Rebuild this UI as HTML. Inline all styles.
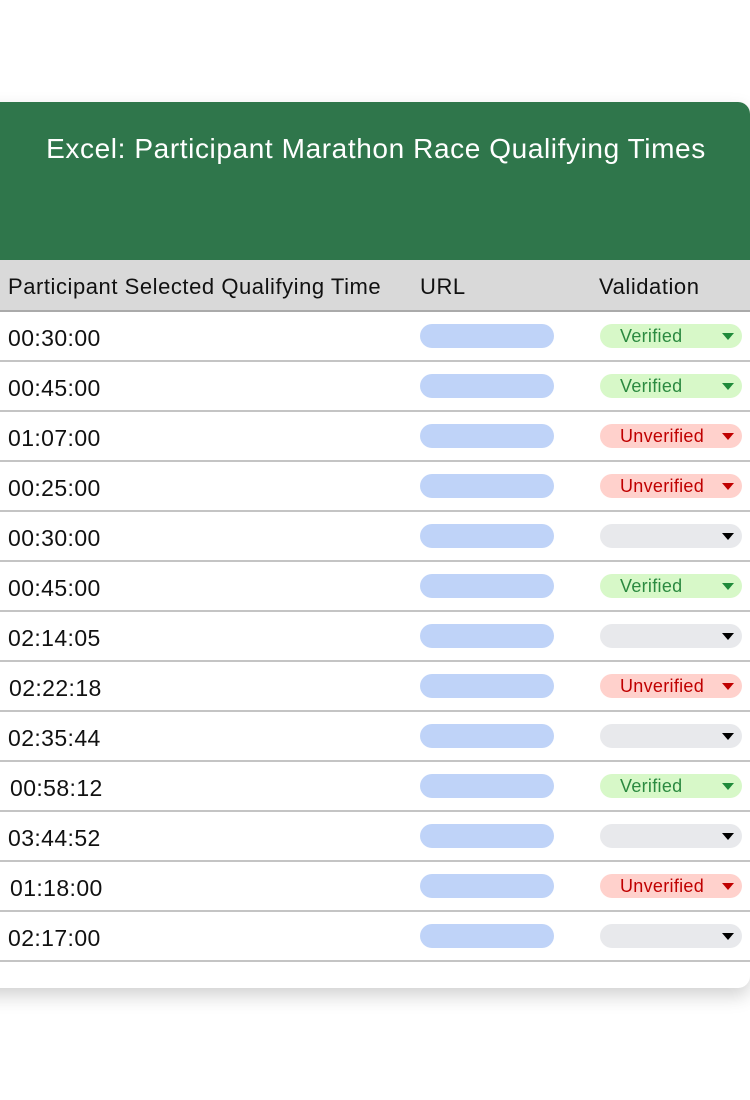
<!DOCTYPE html>
<html><head><style>
body{margin:0;width:750px;height:1100px;background:#fff;font-family:"Liberation Sans",sans-serif;position:relative;overflow:hidden}
.card{position:absolute;left:-20px;top:102px;width:770px;height:886px;background:#fff;border-radius:0 12px 12px 0;box-shadow:0 8px 18px rgba(0,0,0,.18);overflow:hidden}
.hd{height:158px;background:#2f764b;color:#fff;font-size:28px;letter-spacing:0.6px;text-align:center;padding-top:31px;box-sizing:border-box;padding-left:22px}
.th{height:50px;background:#d9d9d9;border-bottom:2px solid #aaa;position:relative;font-size:22px;color:#111;letter-spacing:0.55px}
.th span{position:absolute;top:14px}
.row{height:48px;border-bottom:2px solid #c4c4c4;position:relative}
.t{position:absolute;left:28px;top:13px;font-size:23px;color:#111;letter-spacing:0.4px}
.u{position:absolute;left:440px;top:12px;width:134px;height:24px;border-radius:12px;background:#bfd3f8}
.v{position:absolute;left:620px;top:12px;width:142px;height:24px;border-radius:12px;background:#e8e9ec;font-size:18px;line-height:24px;box-sizing:border-box;padding-left:20px;letter-spacing:0.3px}
.v i{position:absolute;right:8px;top:9px;width:0;height:0;border-left:6px solid transparent;border-right:6px solid transparent;border-top:7px solid #000}
.ok{background:#d7f8c8;color:#2b8a40}.ok i{border-top-color:#1f8a3a}
.no{background:#ffd1cc;color:#c00000}.no i{border-top-color:#c00000}
</style></head><body>
<div class="card">
<div class="hd">Excel: Participant Marathon Race Qualifying Times</div>
<div class="th"><span style="left:28px">Participant Selected Qualifying Time</span><span style="left:440px">URL</span><span style="left:619px">Validation</span></div>
<div class="row"><span class="t">00:30:00</span><span class="u"></span><span class="v ok">Verified<i></i></span></div>
<div class="row"><span class="t">00:45:00</span><span class="u"></span><span class="v ok">Verified<i></i></span></div>
<div class="row"><span class="t">01:07:00</span><span class="u"></span><span class="v no">Unverified<i></i></span></div>
<div class="row"><span class="t">00:25:00</span><span class="u"></span><span class="v no">Unverified<i></i></span></div>
<div class="row"><span class="t">00:30:00</span><span class="u"></span><span class="v"><i></i></span></div>
<div class="row"><span class="t">00:45:00</span><span class="u"></span><span class="v ok">Verified<i></i></span></div>
<div class="row"><span class="t">02:14:05</span><span class="u"></span><span class="v"><i></i></span></div>
<div class="row"><span class="t" style="left:29px">02:22:18</span><span class="u"></span><span class="v no">Unverified<i></i></span></div>
<div class="row"><span class="t">02:35:44</span><span class="u"></span><span class="v"><i></i></span></div>
<div class="row"><span class="t" style="left:30px">00:58:12</span><span class="u"></span><span class="v ok">Verified<i></i></span></div>
<div class="row"><span class="t">03:44:52</span><span class="u"></span><span class="v"><i></i></span></div>
<div class="row"><span class="t" style="left:30px">01:18:00</span><span class="u"></span><span class="v no">Unverified<i></i></span></div>
<div class="row"><span class="t">02:17:00</span><span class="u"></span><span class="v"><i></i></span></div>
</div>
</body></html>
